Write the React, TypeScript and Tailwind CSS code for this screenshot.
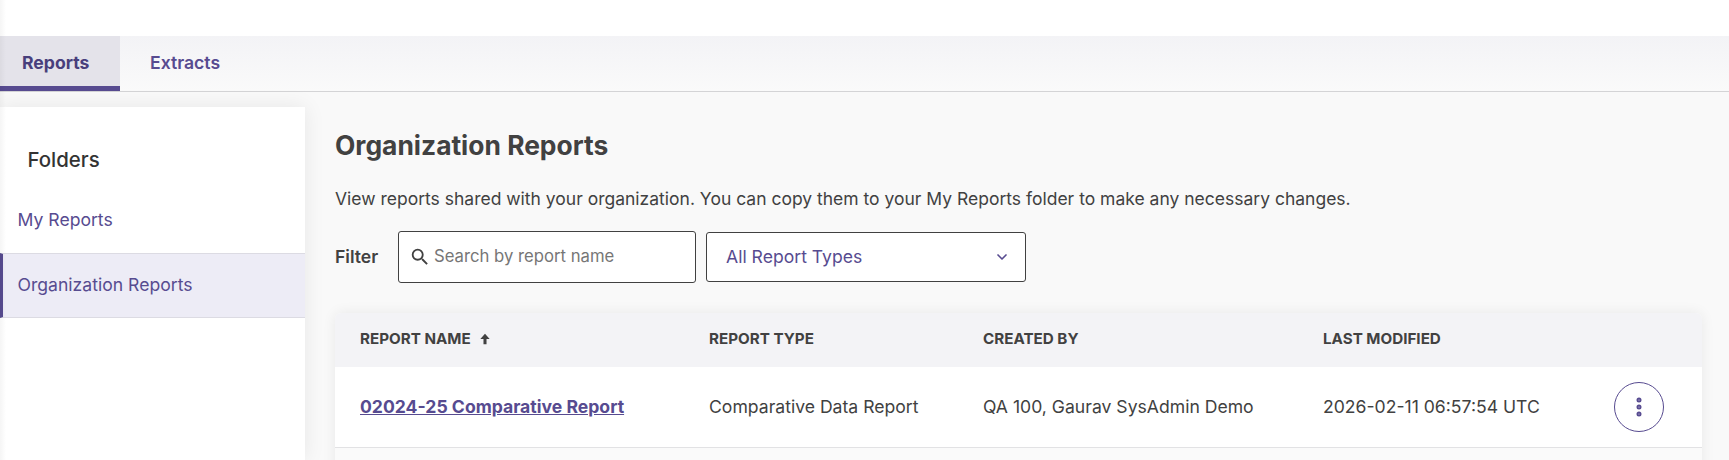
import React from 'react';
import { ChevronDown, MoreVertical } from 'lucide-react';

const Tab = ({ label, active }: { label: string; active?: boolean }) => (
  <div
    className={`flex h-full items-center border-b-[5px] pt-[5px] text-[17.6px] ${
      active
        ? 'w-[120px] border-[#574b90] bg-[#e4e3ea] pl-[22px] font-bold text-[#483f7c]'
        : 'border-transparent px-[30px] font-semibold text-[#574b90]'
    }`}
  >
    {label}
  </div>
);

const columns = 'grid grid-cols-[349px_274px_340px_291px_1fr] items-center pl-[25px]';

const App: React.FC = () => {
  return (
    <div className="relative flex h-[460px] flex-col overflow-hidden bg-[#f9f9f9] font-['Inter',sans-serif] text-[#414141]">
      {/* faint edge shade down the left side of the page */}
      <div className="pointer-events-none absolute inset-y-0 left-0 w-[6px] bg-gradient-to-r from-black/[0.04] to-transparent" />

      <div className="h-9 bg-white" />

      {/* Tabs */}
      <div className="flex h-[56px] border-b border-[#d4d4d6] bg-gradient-to-b from-[#f3f3f6] to-[#fafafa]">
        <Tab label="Reports" active />
        <Tab label="Extracts" />
      </div>

      <div className="mt-[15px] flex min-h-0 flex-1">
        {/* Folders */}
        <aside className="w-[305px] shrink-0 bg-white pt-[42px] shadow-[0_0_20px_rgba(0,0,0,0.08)]">
          <h2 className="pl-[27.5px] text-[20.4px] font-medium leading-[22px] text-[#333333]">Folders</h2>
          <div className="mt-[17px] flex h-[65px] items-center pl-[17.5px] text-[17.6px] text-[#574b90]">My Reports</div>
          <div className="flex h-[65px] items-center border-y border-[#dcdbe3] border-l-[3px] border-l-[#574b90] bg-[#edecf6] pl-[14.5px] text-[17.6px] text-[#574b90]">
            Organization Reports
          </div>
        </aside>

        {/* Main */}
        <main className="min-w-0 flex-1 pl-[30px] pr-[27px]">
          <h1 className="mt-[21px] text-[26.4px] font-bold leading-[34px] text-[#414141]">Organization Reports</h1>
          <p className="mt-[25px] text-[17.5px] leading-6">
            View reports shared with your organization. You can copy them to your My Reports folder to make any
            necessary changes.
          </p>

          <div className="mt-5 flex items-center">
            <span className="w-[63px] text-[17.6px] font-semibold">Filter</span>
            <div className="flex h-[52px] w-[298px] items-center rounded-[3px] border border-[#414141] bg-white pl-[10px]">
              <svg viewBox="0 0 24 24" className="size-[22px] fill-[#414141]">
                <path d="M15.5 14h-.79l-.28-.27A6.471 6.471 0 0 0 16 9.5 6.5 6.5 0 1 0 9.5 16c1.61 0 3.09-.59 4.23-1.57l.27.28v.79l5 4.99L20.49 19l-4.99-5zm-6 0C7.01 14 5 11.99 5 9.5S7.01 5 9.5 5 14 7.01 14 9.5 11.99 14 9.5 14z" />
              </svg>
              <span className="ml-[3px] text-[16.7px] text-[#767676]">Search by report name</span>
            </div>
            <div className="ml-[10px] flex h-[50px] w-[320px] items-center justify-between rounded-[3px] border border-[#414141] bg-white pl-[19px] pr-[15px] text-[17.6px] text-[#574b90]">
              All Report Types
              <ChevronDown className="size-4 text-[#574b90]" strokeWidth={2.5} />
            </div>
          </div>

          {/* Table */}
          <div className="mt-[30px] rounded-t-md shadow-[0_0_14px_rgba(0,0,0,0.07)]">
            <div className={`${columns} h-[54px] rounded-t-md bg-[#f3f3f6] pb-[2px] text-[15.2px] font-bold`}>
              <div className="flex items-center gap-[7px]">
                REPORT NAME
                <svg viewBox="0 0 12 12" className="size-[14px] fill-[#414141]">
                  <path d="M6 1.5 10 6H7.3v4.5H4.7V6H2z" />
                </svg>
              </div>
              <div>REPORT TYPE</div>
              <div>CREATED BY</div>
              <div>LAST MODIFIED</div>
            </div>
            <div className={`${columns} h-[81px] border-b border-[#e2e2e4] bg-white text-[17.6px]`}>
              <a className="font-bold text-[#574b90] underline">02024-25 Comparative Report</a>
              <div>Comparative Data Report</div>
              <div>QA 100, Gaurav SysAdmin Demo</div>
              <div>2026-02-11 06:57:54 UTC</div>
              <button className="flex size-[50px] items-center justify-center rounded-full border border-[#574b90] bg-white">
                <MoreVertical className="size-6 text-[#574b90]" strokeWidth={3} />
              </button>
            </div>
            <div className="h-[81px] bg-[#fafafa]" />
          </div>
        </main>
      </div>
    </div>
  );
};

export default App;
